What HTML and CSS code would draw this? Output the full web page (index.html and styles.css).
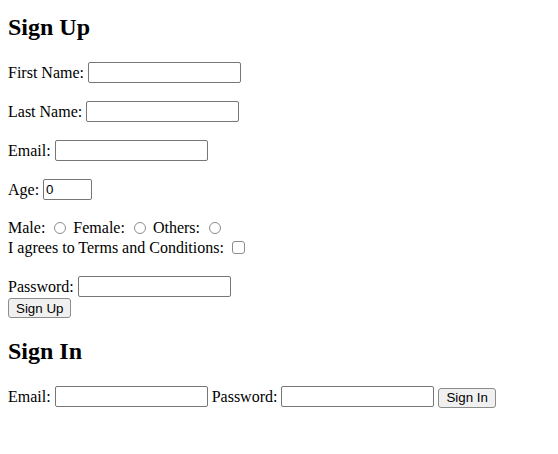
FILE: index.html
```html
<!DOCTYPE html>
<html>
<head>
<meta charset="utf-8">
<title>Sign Up</title>
<link rel="stylesheet" href="styles.css">
</head>
<body>
<h2 class="title first">Sign Up</h2>
<form class="signup">
  <p class="row">First Name: <input class="field" type="text"></p>
  <p class="row">Last Name: <input class="field" type="text"></p>
  <p class="row">Email: <input class="field" type="email"></p>
  <p class="row">Age: <input class="field age" type="number" value="0"></p>
  <p class="row">Male: <input class="radio" type="radio" name="g"> Female: <input class="radio" type="radio" name="g"> Others: <input class="radio" type="radio" name="g"><br>I agrees to Terms and Conditions: <input class="check" type="checkbox"></p>
  <p class="row">Password: <input class="field" type="password"><br><button class="btn" type="button">Sign Up</button></p>
</form>
<h2 class="title">Sign In</h2>
<form class="signin">
  <p class="row">Email: <input class="field" type="email"> Password: <input class="field" type="password"> <button class="btn" type="button">Sign In</button></p>
</form>
</body>
</html>
```
FILE: styles.css
```css
html {
  background: #fff;
}
body {
  margin: 0;
  padding: 0 8px 8px;
  font-family: "Liberation Serif", "Times New Roman", serif;
  font-size: 16px;
  color: #000;
}
.title {
  font-size: 24px;
  font-weight: bold;
  margin: 20px 0;
}
.first {
  margin-top: 14px;
}
.row {
  margin: 16px 0;
}
.field {
  font-family: "Liberation Sans", Arial, sans-serif;
  font-size: 13.33px;
  width: 153px;
  height: 21px;
  box-sizing: border-box;
  margin: 1px 0;
  padding: 1px 2px;
  border: 1px solid #767676;
  border-radius: 2px;
  background: #fff;
  vertical-align: 1px;
}
.age {
  width: 49px;
}
.radio {
  appearance: none;
  -webkit-appearance: none;
  box-sizing: border-box;
  width: 12px;
  height: 12px;
  margin: 5px 3px 0 5px;
  border: 1px solid #8c8c8c;
  border-radius: 50%;
  background: #fff;
  vertical-align: -1px;
}
.check {
  appearance: none;
  -webkit-appearance: none;
  box-sizing: border-box;
  width: 13px;
  height: 13px;
  margin: 4px 3px 5px 4px;
  border: 1px solid #8c8c8c;
  border-radius: 3px;
  background: #fff;
  vertical-align: -6px;
}
.btn {
  font-family: "Liberation Sans", Arial, sans-serif;
  font-size: 13.33px;
  height: 20px;
  box-sizing: border-box;
  padding: 1px 7px;
  border: 1px solid #8c8c8c;
  border-radius: 3px;
  background: #f0f0f0;
  color: #000;
}
```
